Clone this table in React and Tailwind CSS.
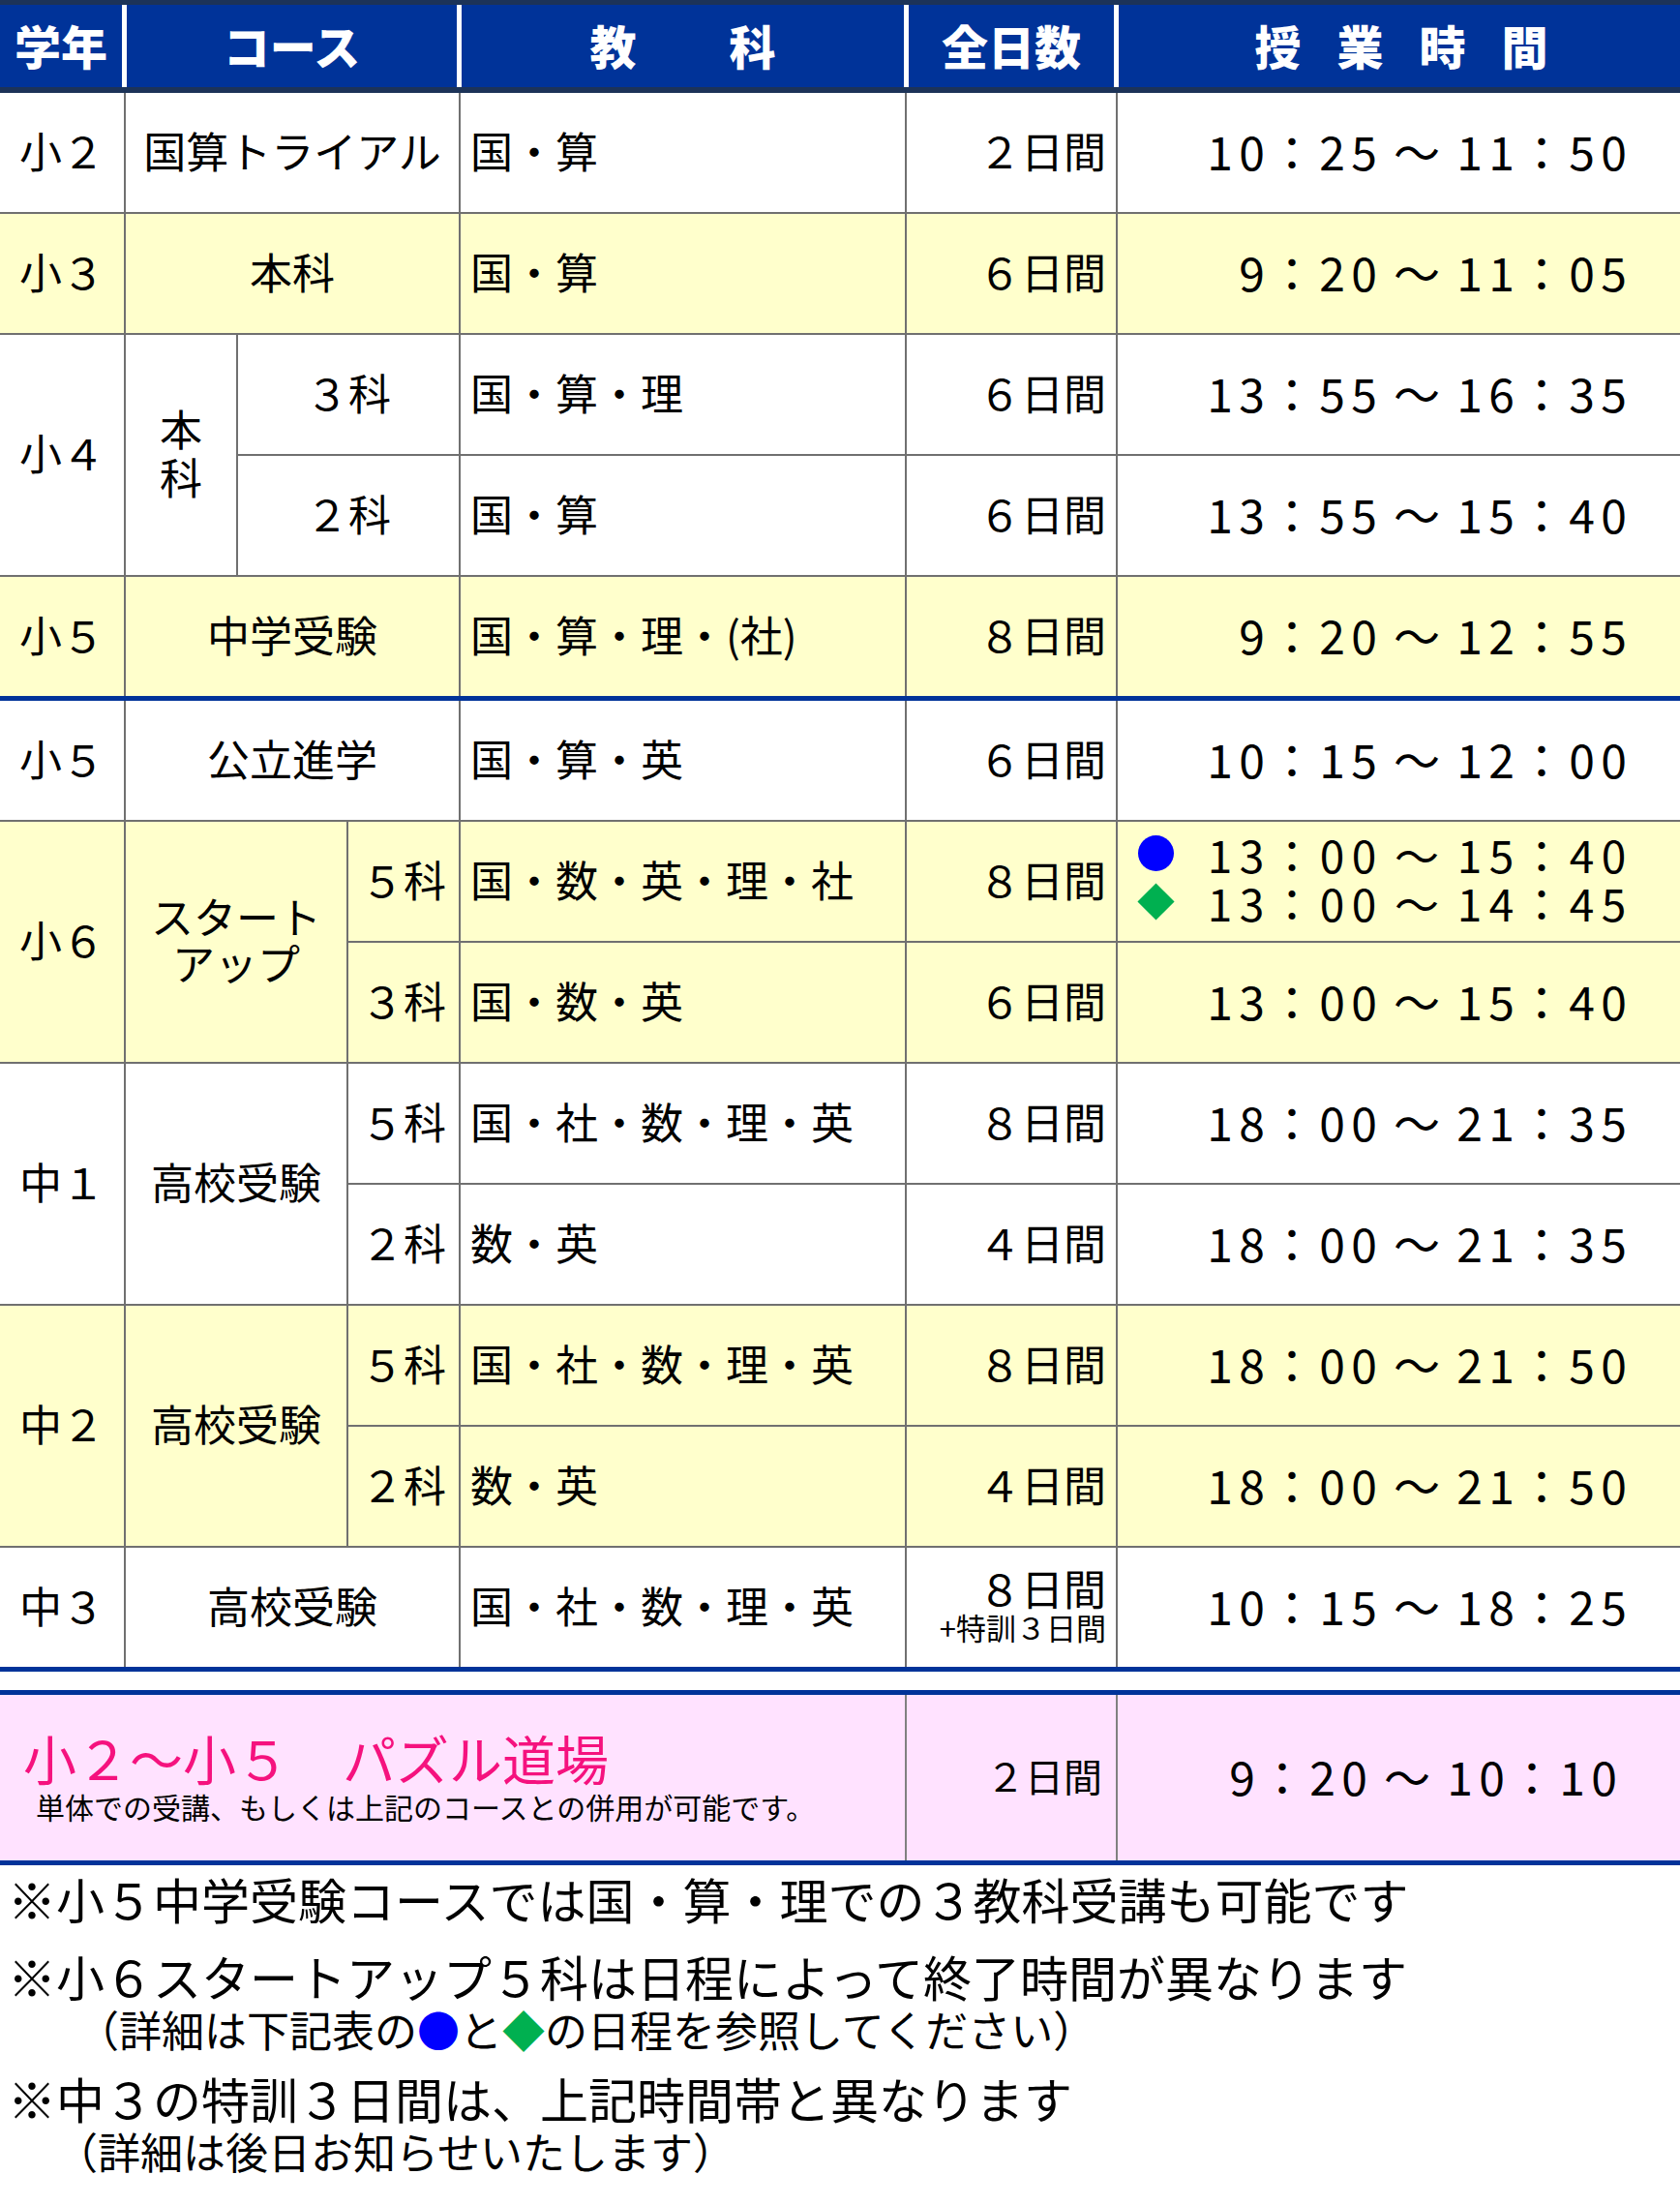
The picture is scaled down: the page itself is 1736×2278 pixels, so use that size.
import React from 'react';

function Time({ s }) {
  return (
    <span className="inline-flex">
      {Array.from(s).map((c, i) => (
        <span
          key={i}
          className={
            c === '：'
              ? 'inline-block w-[50px] text-center'
              : c === '～'
              ? 'inline-block w-[76px] text-center'
              : 'inline-block w-[33px] text-center'
          }
        >
          {c}
        </span>
      ))}
    </span>
  );
}

const Y = 'bg-[#ffffcc]';
const W = 'bg-white';

function C({ className, children }) {
  return <div className={'flex items-center pb-[6px] ' + className}>{children}</div>;
}

function Grade({ pos, bg, children }) {
  return <C className={`${pos} ${bg} justify-center`}>{children}</C>;
}
function Course({ pos, bg, children }) {
  return <C className={`${pos} ${bg} justify-center text-center`}>{children}</C>;
}
function Subj({ pos, bg, children }) {
  return <C className={`${pos} ${bg} justify-start pl-[10px]`}>{children}</C>;
}
function Days({ pos, bg, children }) {
  return <C className={`${pos} ${bg} justify-end pr-[10px]`}>{children}</C>;
}
function TimeCell({ pos, bg, s }) {
  return (
    <C className={`${pos} ${bg} justify-end pr-[52px] text-[48px]`}>
      <Time s={s} />
    </C>
  );
}

export default function App() {
  return (
    <div className="w-[1736px] min-h-[2278px] bg-white text-black font-['Noto_Sans_CJK_JP','Noto_Sans',sans-serif] leading-none">
      {/* Header */}
      <div className="flex h-[96px] border-t-[5px] border-b-[6px] border-[#1c3358] bg-[#003399] text-white font-black text-[48px]">
        <div className="w-[126px] flex items-center justify-center pb-[4px]">学年</div>
        <div className="w-[5px] bg-white" />
        <div className="w-[341px] flex items-center justify-center pb-[4px]">コース</div>
        <div className="w-[5px] bg-white" />
        <div className="w-[457px] flex items-center justify-center pb-[4px]">教　　科</div>
        <div className="w-[5px] bg-white" />
        <div className="w-[212px] flex items-center justify-center pb-[4px]">全日数</div>
        <div className="w-[5px] bg-white" />
        <div className="w-[580px] flex items-center justify-center pb-[4px]">
          <span className="tracking-[37px] mr-[-37px] ml-[4px]">授業時間</span>
        </div>
      </div>

      {/* Section 1 */}
      <div className="grid grid-cols-[128px_114px_112px_114px_459px_216px_581px] grid-rows-[repeat(5,123px)] gap-[2px] bg-[#707070] text-[44px]">
        {/* 小2 */}
        <Grade pos="col-start-1 row-start-1" bg={W}>小２</Grade>
        <Course pos="col-start-2 col-span-3 row-start-1" bg={W}>国算トライアル</Course>
        <Subj pos="col-start-5 row-start-1" bg={W}>国・算</Subj>
        <Days pos="col-start-6 row-start-1" bg={W}>２日間</Days>
        <TimeCell pos="col-start-7 row-start-1" bg={W} s="10：25～11：50" />
        {/* 小3 */}
        <Grade pos="col-start-1 row-start-2" bg={Y}>小３</Grade>
        <Course pos="col-start-2 col-span-3 row-start-2" bg={Y}>本科</Course>
        <Subj pos="col-start-5 row-start-2" bg={Y}>国・算</Subj>
        <Days pos="col-start-6 row-start-2" bg={Y}>６日間</Days>
        <TimeCell pos="col-start-7 row-start-2" bg={Y} s="9：20～11：05" />
        {/* 小4 */}
        <Grade pos="col-start-1 row-start-3 row-span-2" bg={W}>小４</Grade>
        <C className={`col-start-2 row-start-3 row-span-2 ${W} justify-center`}>
          <div className="flex flex-col items-center leading-[50px]">
            <span>本</span>
            <span>科</span>
          </div>
        </C>
        <Course pos="col-start-3 col-span-2 row-start-3" bg={W}>３科</Course>
        <Course pos="col-start-3 col-span-2 row-start-4" bg={W}>２科</Course>
        <Subj pos="col-start-5 row-start-3" bg={W}>国・算・理</Subj>
        <Subj pos="col-start-5 row-start-4" bg={W}>国・算</Subj>
        <Days pos="col-start-6 row-start-3" bg={W}>６日間</Days>
        <Days pos="col-start-6 row-start-4" bg={W}>６日間</Days>
        <TimeCell pos="col-start-7 row-start-3" bg={W} s="13：55～16：35" />
        <TimeCell pos="col-start-7 row-start-4" bg={W} s="13：55～15：40" />
        {/* 小5 中学受験 */}
        <Grade pos="col-start-1 row-start-5" bg={Y}>小５</Grade>
        <Course pos="col-start-2 col-span-3 row-start-5" bg={Y}>中学受験</Course>
        <Subj pos="col-start-5 row-start-5" bg={Y}>国・算・理・(社)</Subj>
        <Days pos="col-start-6 row-start-5" bg={Y}>８日間</Days>
        <TimeCell pos="col-start-7 row-start-5" bg={Y} s="9：20～12：55" />
      </div>

      <div className="h-[5px] bg-[#003399]" />

      {/* Section 2 */}
      <div className="grid grid-cols-[128px_114px_112px_114px_459px_216px_581px] grid-rows-[repeat(8,123px)] gap-[2px] bg-[#707070] text-[44px]">
        {/* 小5 公立進学 */}
        <Grade pos="col-start-1 row-start-1" bg={W}>小５</Grade>
        <Course pos="col-start-2 col-span-3 row-start-1" bg={W}>公立進学</Course>
        <Subj pos="col-start-5 row-start-1" bg={W}>国・算・英</Subj>
        <Days pos="col-start-6 row-start-1" bg={W}>６日間</Days>
        <TimeCell pos="col-start-7 row-start-1" bg={W} s="10：15～12：00" />
        {/* 小6 */}
        <Grade pos="col-start-1 row-start-2 row-span-2" bg={Y}>小６</Grade>
        <C className={`col-start-2 col-span-2 row-start-2 row-span-2 ${Y} justify-center`}>
          <div className="flex flex-col items-center leading-[48px]">
            <span>スタート</span>
            <span>アップ</span>
          </div>
        </C>
        <Course pos="col-start-4 row-start-2" bg={Y}>５科</Course>
        <Course pos="col-start-4 row-start-3" bg={Y}>３科</Course>
        <Subj pos="col-start-5 row-start-2" bg={Y}>国・数・英・理・社</Subj>
        <Subj pos="col-start-5 row-start-3" bg={Y}>国・数・英</Subj>
        <Days pos="col-start-6 row-start-2" bg={Y}>８日間</Days>
        <Days pos="col-start-6 row-start-3" bg={Y}>６日間</Days>
        <div className={`col-start-7 row-start-2 ${Y} flex flex-col items-end justify-center pr-[52px] pb-[8px] text-[46px]`}>
          <div className="flex items-center h-[50px] leading-[50px]">
            <div className="w-[40px] mr-[30px] flex justify-center">
              <div className="w-[37px] h-[37px] rounded-full bg-[#0000ff]" />
            </div>
            <Time s="13：00～15：40" />
          </div>
          <div className="flex items-center h-[50px] leading-[50px]">
            <div className="w-[40px] mr-[30px] flex justify-center">
              <div className="w-[27px] h-[27px] rotate-45 bg-[#00b050]" />
            </div>
            <Time s="13：00～14：45" />
          </div>
        </div>
        <TimeCell pos="col-start-7 row-start-3" bg={Y} s="13：00～15：40" />
        {/* 中1 */}
        <Grade pos="col-start-1 row-start-4 row-span-2" bg={W}>中１</Grade>
        <Course pos="col-start-2 col-span-2 row-start-4 row-span-2" bg={W}>高校受験</Course>
        <Course pos="col-start-4 row-start-4" bg={W}>５科</Course>
        <Course pos="col-start-4 row-start-5" bg={W}>２科</Course>
        <Subj pos="col-start-5 row-start-4" bg={W}>国・社・数・理・英</Subj>
        <Subj pos="col-start-5 row-start-5" bg={W}>数・英</Subj>
        <Days pos="col-start-6 row-start-4" bg={W}>８日間</Days>
        <Days pos="col-start-6 row-start-5" bg={W}>４日間</Days>
        <TimeCell pos="col-start-7 row-start-4" bg={W} s="18：00～21：35" />
        <TimeCell pos="col-start-7 row-start-5" bg={W} s="18：00～21：35" />
        {/* 中2 */}
        <Grade pos="col-start-1 row-start-6 row-span-2" bg={Y}>中２</Grade>
        <Course pos="col-start-2 col-span-2 row-start-6 row-span-2" bg={Y}>高校受験</Course>
        <Course pos="col-start-4 row-start-6" bg={Y}>５科</Course>
        <Course pos="col-start-4 row-start-7" bg={Y}>２科</Course>
        <Subj pos="col-start-5 row-start-6" bg={Y}>国・社・数・理・英</Subj>
        <Subj pos="col-start-5 row-start-7" bg={Y}>数・英</Subj>
        <Days pos="col-start-6 row-start-6" bg={Y}>８日間</Days>
        <Days pos="col-start-6 row-start-7" bg={Y}>４日間</Days>
        <TimeCell pos="col-start-7 row-start-6" bg={Y} s="18：00～21：50" />
        <TimeCell pos="col-start-7 row-start-7" bg={Y} s="18：00～21：50" />
        {/* 中3 */}
        <Grade pos="col-start-1 row-start-8" bg={W}>中３</Grade>
        <Course pos="col-start-2 col-span-3 row-start-8" bg={W}>高校受験</Course>
        <Subj pos="col-start-5 row-start-8" bg={W}>国・社・数・理・英</Subj>
        <C className={`col-start-6 row-start-8 ${W} justify-end pr-[10px]`}>
          <div className="flex flex-col items-end">
            <span className="leading-[46px]">８日間</span>
            <span className="text-[31px] leading-[36px]">+特訓３日間</span>
          </div>
        </C>
        <TimeCell pos="col-start-7 row-start-8" bg={W} s="10：15～18：25" />
      </div>

      <div className="h-[5px] bg-[#003399]" />
      <div className="h-[19px] bg-white" />
      <div className="h-[5px] bg-[#003399]" />

      {/* Puzzle row */}
      <div className="grid grid-cols-[935px_216px_581px] h-[171px] gap-x-[2px] bg-[#808080]">
        <div className="bg-[#ffe2ff] flex flex-col justify-center pb-[4px]">
          <div className="pl-[24px] text-[55px] leading-[60px] text-[#f5127e]">小２～小５　パズル道場</div>
          <div className="pl-[37px] mt-[3px] text-[30px] leading-[36px]">単体での受講、もしくは上記のコースとの併用が可能です。</div>
        </div>
        <div className="bg-[#ffe2ff] flex items-center justify-end pr-[14px] pb-[6px] text-[40px]">２日間</div>
        <div className="bg-[#ffe2ff] flex items-center justify-end pr-[62px] pb-[6px] text-[48px]">
          <Time s="9：20～10：10" />
        </div>
      </div>
      <div className="h-[5px] bg-[#003399]" />

      {/* Notes */}
      <div className="pt-[4px] text-[50px]">
        <div className="pl-[8px] leading-[60px]">※小５中学受験コースでは国・算・理での３教科受講も可能です</div>
        <div className="pl-[8px] mt-[20px] leading-[60px]">※小６スタートアップ５科は日程によって終了時間が異なります</div>
        <div className="pl-[79px] text-[44px] leading-[50px]">
          （詳細は下記表の<span className="text-[#0000ff]">●</span>と<span className="text-[#00b050]">◆</span>の日程を参照してください）
        </div>
        <div className="pl-[8px] mt-[16px] leading-[60px]">※中３の特訓３日間は、上記時間帯と異なります</div>
        <div className="pl-[57px] text-[44px] leading-[50px]">（詳細は後日お知らせいたします）</div>
      </div>
    </div>
  );
}
